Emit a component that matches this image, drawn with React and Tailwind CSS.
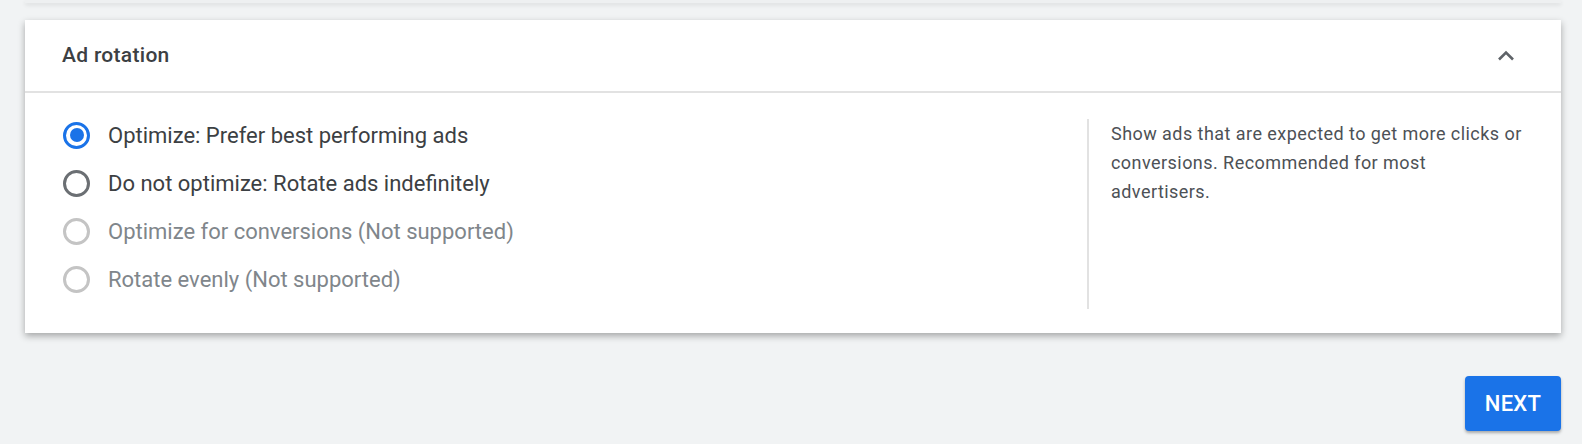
import React from 'react';

const options = [
  { id: 'opt', label: 'Optimize: Prefer best performing ads', state: 'checked' },
  { id: 'rot', label: 'Do not optimize: Rotate ads indefinitely', state: 'normal' },
  { id: 'conv', label: 'Optimize for conversions (Not supported)', state: 'disabled' },
  { id: 'even', label: 'Rotate evenly (Not supported)', state: 'disabled' },
];

function Radio({ state }) {
  if (state === 'checked') {
    return (
      <span className="flex h-[27px] w-[27px] shrink-0 items-center justify-center rounded-full border-[3px] border-[#1a73e8]">
        <span className="h-[14px] w-[14px] rounded-full bg-[#1a73e8]" />
      </span>
    );
  }
  const color = state === 'disabled' ? 'border-[#c4c4c4]' : 'border-[#6b6f73]';
  return <span className={`h-[27px] w-[27px] shrink-0 rounded-full border-[3px] ${color}`} />;
}

export default function App() {
  const [selected] = React.useState('opt');

  return (
    <div className="h-[444px] w-full overflow-hidden bg-[#f1f3f4]" style={{ fontFamily: 'Roboto, "Liberation Sans", sans-serif' }}>
      {/* bottom edge of the card above */}
      <div className="ml-[25px] mr-[21px] h-[3px] bg-[#eef0f1] shadow-[0_2px_4px_rgba(0,0,0,0.1)]" />

      <div className="ml-[25px] mr-[21px] mt-[17px] bg-white shadow-[0_3px_7px_rgba(0,0,0,0.32)]" data-name="ad-rotation-card">
        <div className="flex h-[73px] items-center justify-between border-b-2 border-[#e2e2e2] pl-[37px] pr-[46px]">
          <h3 className="text-[21px] font-medium tracking-[0.3px] text-[#3c4043]">Ad rotation</h3>
          <svg width="18" height="11" viewBox="0 0 18 11" fill="none">
            <path d="M2 9.5 L9 2.5 L16 9.5" stroke="#5f6368" strokeWidth="2.6" />
          </svg>
        </div>

        <div className="flex">
          <div className="flex-1 pb-[30px] pl-[38px] pt-[18px]">
            {options.map(o => (
              <label key={o.id} className="flex h-[48px] items-center gap-[18px]">
                <Radio state={o.id === selected ? 'checked' : o.state} />
                <span className={`text-[22px] ${o.state === 'disabled' ? 'text-[#80868b]' : 'text-[#3c4043]'}`}>
                  {o.label}
                </span>
              </label>
            ))}
          </div>

          <div className="mb-[24px] mt-[26px] w-[474px] border-l-2 border-[#e2e2e2] pl-[22px]">
            <p className="text-[18px] leading-[29px] tracking-[0.45px] text-[#4d5156]">
              Show ads that are expected to get more clicks or
              <br />
              conversions. Recommended for most
              <br />
              advertisers.
            </p>
          </div>
        </div>
      </div>

      <div className="mr-[21px] mt-[43px] flex justify-end">
        <button
          type="button"
          className="h-[55px] w-[96px] rounded-[4px] bg-[#1a73e8] text-[22px] font-medium tracking-[0.3px] text-white shadow-[0_2px_3px_rgba(0,0,0,0.3)]"
        >
          NEXT
        </button>
      </div>
    </div>
  );
}
